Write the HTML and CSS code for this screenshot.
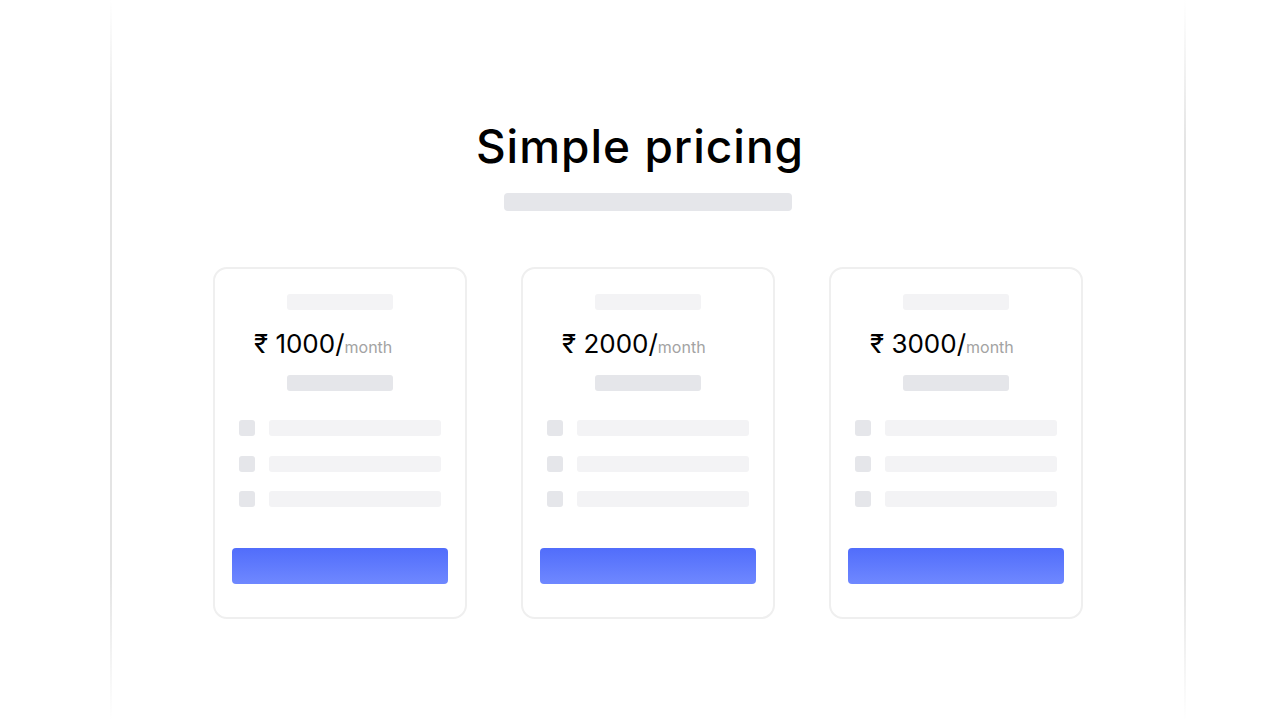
FILE: index.html
```html
<!DOCTYPE html>
<html lang="en">
<head>
<meta charset="utf-8">
<title>Simple pricing</title>
<link rel="stylesheet" href="styles.css">
</head>
<body>
<main class="page">
  <h1 class="title">Simple pricing</h1>
  <div class="subtitle-bar"></div>
  <section class="cards">
    <article class="card">
      <div class="bar bar-light"></div>
      <div class="price"><span class="amount">₹ 1000/</span><span class="per">month</span></div>
      <div class="bar bar-dark"></div>
      <ul class="features">
        <li class="feature"><span class="check"></span><span class="line"></span></li>
        <li class="feature"><span class="check"></span><span class="line"></span></li>
        <li class="feature"><span class="check"></span><span class="line"></span></li>
      </ul>
      <div class="button"></div>
    </article>
    <article class="card">
      <div class="bar bar-light"></div>
      <div class="price"><span class="amount">₹ 2000/</span><span class="per">month</span></div>
      <div class="bar bar-dark"></div>
      <ul class="features">
        <li class="feature"><span class="check"></span><span class="line"></span></li>
        <li class="feature"><span class="check"></span><span class="line"></span></li>
        <li class="feature"><span class="check"></span><span class="line"></span></li>
      </ul>
      <div class="button"></div>
    </article>
    <article class="card">
      <div class="bar bar-light"></div>
      <div class="price"><span class="amount">₹ 3000/</span><span class="per">month</span></div>
      <div class="bar bar-dark"></div>
      <ul class="features">
        <li class="feature"><span class="check"></span><span class="line"></span></li>
        <li class="feature"><span class="check"></span><span class="line"></span></li>
        <li class="feature"><span class="check"></span><span class="line"></span></li>
      </ul>
      <div class="button"></div>
    </article>
  </section>
</main>
</body>
</html>
```

FILE: styles.css
```css
* { box-sizing: border-box; }

html, body {
  margin: 0;
  padding: 0;
  background: #ffffff;
  height: 720px;
  overflow: hidden;
}

body {
  font-family: "Inter", "DejaVu Sans", sans-serif;
  color: #000;
}

.page {
  margin-left: 110px;
  width: 1076px;
  height: 720px;
  padding-top: 120px;
  display: flex;
  flex-direction: column;
  align-items: center;
  border-left: 2px solid #e2e2e2;
  border-right: 2px solid #e2e2e2;
  border-image: linear-gradient(to bottom, rgba(226,226,226,0) 0%, #e4e4e4 20%, #e4e4e4 80%, rgba(226,226,226,0) 100%) 1;
}

.title {
  margin: 0;
  font-size: 46px;
  line-height: 53px;
  font-weight: 500;
  letter-spacing: 1px;
  position: relative;
  left: -8px;
}

.subtitle-bar {
  margin-top: 20px;
  width: 288px;
  height: 18px;
  border-radius: 4px;
  background: #e5e6ea;
}

.cards {
  margin-top: 56px;
  display: flex;
  gap: 54px;
}

.card {
  width: 254px;
  height: 352px;
  border: 2px solid #efefef;
  border-radius: 14px;
  padding: 25px 24px 33px;
  display: flex;
  flex-direction: column;
  align-items: center;
}

.bar {
  width: 106px;
  height: 16px;
  border-radius: 3px;
}

.bar-light { background: #f3f3f5; }
.bar-dark { background: #e5e6ea; margin-top: 15px; }

.price {
  margin-top: 18px;
  align-self: stretch;
  padding-left: 15px;
  height: 32px;
  line-height: 32px;
  white-space: nowrap;
}

.amount {
  font-size: 26px;
  font-weight: 400;
  color: #000;
}

.per {
  font-size: 16px;
  color: #a3a3a3;
}

.features {
  list-style: none;
  margin: 29px 0 0;
  padding: 0;
  align-self: stretch;
  display: flex;
  flex-direction: column;
  gap: 19.5px;
}

.feature {
  display: flex;
  gap: 14px;
  height: 16px;
}

.check {
  width: 16px;
  height: 16px;
  border-radius: 3px;
  background: #e5e6ea;
}

.line {
  width: 172px;
  height: 16px;
  border-radius: 3px;
  background: #f3f3f5;
}

.button {
  margin-top: 41px;
  width: 216px;
  height: 36px;
  border-radius: 4px;
  background: linear-gradient(to bottom, #516dfb, #6f88ff);
}
```
